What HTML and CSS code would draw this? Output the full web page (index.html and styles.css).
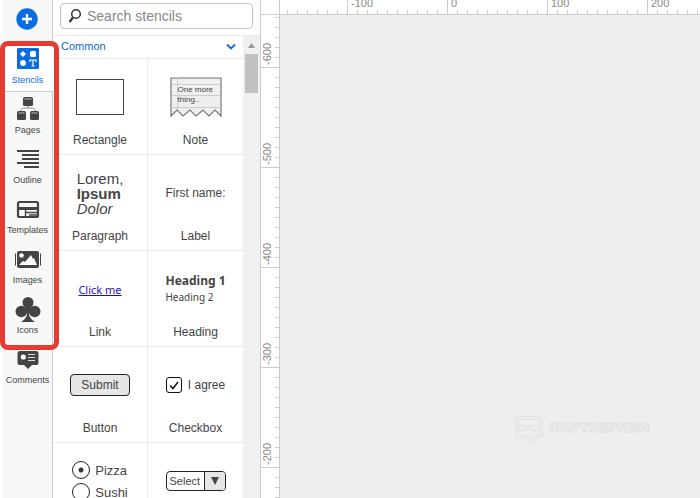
FILE: index.html
```html
<!DOCTYPE html>
<html lang="en">
<head>
    <meta charset="UTF-8">
    <meta name="viewport" content="width=device-width, initial-scale=1.0">
    <title>Stencils</title>
    <link rel="stylesheet" href="styles.css">
</head>
<body>

    <nav class="sidebar">
        <button class="add" aria-label="Add">
            <svg width="22" height="22" viewBox="0 0 22 22"><circle cx="11" cy="11" r="10.7" fill="#0a6ce0"/><path d="M11 6v10M6 11h10" stroke="#fff" stroke-width="2.4"/></svg>
        </button>
        <a href="#stencils" class="tab active">
            <svg width="28" height="28" viewBox="0 0 28 28"><rect x="3" y="3" width="22" height="21" rx="1" fill="#0a6ce0"/><path d="M9 6l3 3-3 3-3-3z" fill="#fff"/><rect x="16" y="6" width="6" height="6" rx="1.5" fill="#fff"/><circle cx="9" cy="18" r="2.9" fill="#fff"/><path d="M16 17v-2h6v2M19 15v6M17.5 21h3" fill="none" stroke="#fff" stroke-width="1.2"/></svg>
            <span>Stencils</span>
        </a>
        <a href="#pages" class="tab">
            <svg width="28" height="28" viewBox="0 0 28 28"><g fill="#444"><rect x="9" y="2" width="10" height="9" rx="1.5"/><rect x="3" y="16" width="9" height="9" rx="1.5"/><rect x="16" y="16" width="9" height="9" rx="1.5"/></g><path d="M10.500 4h7M4.500 18h6M17.500 18h6" stroke="#bbb" stroke-width="1"/><path d="M14 11v2M7 16c0-3 2-3 7-3s7 0 7 3" fill="none" stroke="#888"/></svg>
            <span>Pages</span>
        </a>
        <a href="#outline" class="tab">
            <svg width="28" height="28" viewBox="0 0 28 28"><path d="M3 6h22M8 10h17M8 14h17M3 18h22M10 22h15" stroke="#444" stroke-width="2"/></svg>
            <span>Outline</span>
        </a>
        <a href="#templates" class="tab">
            <svg width="28" height="28" viewBox="0 0 28 28"><rect x="4" y="7" width="20" height="15" rx="1.5" fill="none" stroke="#444" stroke-width="2.2"/><path d="M4 13.500h20" stroke="#444" stroke-width="3"/><path d="M11.500 14v8M12 17.500h12M15 20h9" stroke="#444" stroke-width="1.4"/></svg>
            <span>Templates</span>
        </a>
        <a href="#images" class="tab">
            <svg width="28" height="28" viewBox="0 0 28 28"><rect x="3" y="6" width="22" height="17" rx="2" fill="#444"/><path d="M1.500 8.500v12M26.500 8.500v12" stroke="#444"/><circle cx="7.500" cy="10.500" r="2.300" fill="#fff"/><path d="M5 20l4-4 2 1 6-7 2 4 1-1 3 7z" fill="#fff"/></svg>
            <span>Images</span>
        </a>
        <a href="#icons" class="tab">
            <svg width="28" height="28" viewBox="0 0 28 28"><g fill="#444"><circle cx="14" cy="7.500" r="5.500"/><circle cx="7.300" cy="16.500" r="5.800"/><circle cx="20.700" cy="16.500" r="5.800"/><path d="M11 10h6l-1 4h2v4h-3c0 4 2 6 6 9H7c4-3 6-5 6-9h-3v-4h2z"/></g></svg>
            <span>Icons</span>
        </a>
        <a href="#comments" class="tab">
            <svg width="28" height="28" viewBox="0 0 28 28"><path d="M6 6h16q2.500 0 2.500 2.500v9q0 2.500-2.500 2.500h-4l-4 4-4-4H6q-2.500 0-2.500-2.500v-9Q3.500 6 6 6z" fill="#444"/><circle cx="9.300" cy="12" r="2.600" fill="#fff"/><path d="M14 9.500h7M14 12.500h7M14 15.500h7" stroke="#ddd" stroke-width="1.200"/></svg>
            <span>Comments</span>
        </a>
    </nav>

    <section class="panel">
        <div class="search">
            <svg width="14" height="16" viewBox="0 0 14 16"><circle cx="8" cy="6" r="4.300" fill="none" stroke="#333" stroke-width="1.500"/><path d="M5 9.500L1.500 14" stroke="#333" stroke-width="2.200"/></svg>
            <input type="text" placeholder="Search stencils" aria-label="Search stencils">
        </div>
        <div class="panel-body">
            <div class="list">
                <button class="category">
                    Common
                    <svg width="10" height="7" viewBox="0 0 10 7"><path d="M1 1.500l4 4 4-4" fill="none" stroke="#0a6ce0" stroke-width="1.800"/></svg>
                </button>
                <div class="grid">
                    <div class="cell">
                        <div class="preview"><div class="rectangle"></div></div>
                        <div class="name">Rectangle</div>
                    </div>
                    <div class="cell">
                        <div class="preview">
                            <div class="note">
                                <svg width="52" height="41" viewBox="0 0 52 41"><path d="M1 1h50v38l-6-6-6 6-6-6-7 6-6-6-7 6-6-6-6 6z" fill="#efefef" stroke="#777" stroke-width="1.200"/><path d="M1 7.500h50M1 18.500h50M1 30.500h50M7.500 1v31" stroke="#ccc"/></svg>
                                <p>One more thing..</p>
                            </div>
                        </div>
                        <div class="name">Note</div>
                    </div>
                    <div class="cell">
                        <div class="preview"><div class="paragraph">Lorem,<br><b>Ipsum</b><br><i>Dolor</i></div></div>
                        <div class="name">Paragraph</div>
                    </div>
                    <div class="cell">
                        <div class="preview">First name:</div>
                        <div class="name">Label</div>
                    </div>
                    <div class="cell">
                        <div class="preview"><a href="#link" class="link">Click me</a></div>
                        <div class="name">Link</div>
                    </div>
                    <div class="cell">
                        <div class="preview">
                            <div class="heading">
                                <h1>Heading 1</h1>
                                <h2>Heading 2</h2>
                            </div>
                        </div>
                        <div class="name">Heading</div>
                    </div>
                    <div class="cell">
                        <div class="preview"><button class="submit">Submit</button></div>
                        <div class="name">Button</div>
                    </div>
                    <div class="cell">
                        <div class="preview">
                            <label class="check">
                                <input type="checkbox" checked>
                                <svg width="10" height="9" viewBox="0 0 10 9"><path d="M1 4.500l3 3L9 1" fill="none" stroke="#111" stroke-width="1.500"/></svg>
                                I agree
                            </label>
                        </div>
                        <div class="name">Checkbox</div>
                    </div>
                    <div class="cell">
                        <div class="preview">
                            <div class="radios">
                                <label><input type="radio" name="food" checked>Pizza</label>
                                <label><input type="radio" name="food">Sushi</label>
                            </div>
                        </div>
                    </div>
                    <div class="cell">
                        <div class="preview">
                            <div class="select">
                                <select aria-label="Select"><option>Select</option></select>
                                <span class="arrow"><svg width="10" height="8" viewBox="0 0 10 8"><path d="M1 0h8L5 8z" fill="#444"/></svg></span>
                            </div>
                        </div>
                    </div>
                </div>
            </div>
            <div class="scrollbar">
                <svg width="7" height="5" viewBox="0 0 7 5"><path d="M0 5h7L3.500 0z" fill="#999"/></svg>
                <div class="thumb"></div>
            </div>
        </div>
    </section>

    <main class="workspace">
        <div class="corner"></div>
        <div class="ruler-top">
            <span></span><span>-100</span><span>0</span><span>100</span><span>200</span>
        </div>
        <div class="ruler-left">
            <span>-600</span><span>-500</span><span>-400</span><span>-300</span><span>-200</span><span></span>
        </div>
        <div class="canvas">
            <div class="watermark">
                <svg width="28" height="30" viewBox="0 0 28 30"><g fill="none" stroke="#e0e0e0"><path d="M2.500.5h23q2 0 2 2v17.500q0 2-2 2H19v7.500h-1.500L10 22H2.500q-2 0-2-2V2.500q0-2 2-2z"/><path d="M3 3h22v16.500h-8.500v6L11 19.500H3z"/><path d="M4.500 9.500h19v3q-1 2.500-4 2.500t-4-4h-3q-1 4-4 4t-4-2.500z"/></g></svg>
                <span>ПАРТНЕРКИН</span>
            </div>
        </div>
    </main>

    <div class="highlight"></div>

</body>
</html>
```
FILE: styles.css
```css
* {
    box-sizing: border-box;
}
body {
    margin: 0;
    display: flex;
    height: 100vh;
    overflow: hidden;
    position: relative;
    background: #fff;
    font-family: "Liberation Sans", Arial, sans-serif;
    font-size: 12px;
    color: #444;
}
button, input, select {
    font-family: inherit;
    color: inherit;
    margin: 0;
}
svg {
    display: block;
    flex: none;
}

/* left navigation */
.sidebar {
    width: 50px;
    flex: none;
    margin-left: 3px;
    background: #f8f8f8;
    border-right: 1px solid #ccc;
}
.add {
    display: flex;
    width: 100%;
    height: 42px;
    padding: 8px 0 0 13px;
    border: none;
    background: none;
}
.tab {
    display: flex;
    flex-direction: column;
    align-items: center;
    height: 50px;
    padding-top: 3px;
    font-size: 9px;
    line-height: 14px;
    color: #444;
    text-decoration: none;
}
.active {
    margin-right: -1px;
    padding-right: 1px;
    background: #fff;
    border-bottom: 1px solid #ccc;
    color: #0a6ce0;
}

/* stencil panel */
.panel {
    display: flex;
    flex-direction: column;
    width: 207px;
    flex: none;
}
.search {
    display: flex;
    align-items: center;
    height: 26px;
    margin: 3px 7px 6px;
    padding-left: 7px;
    gap: 5px;
    border: 1px solid #c4c4c4;
    border-radius: 4px;
}
.search input {
    flex: 1;
    min-width: 0;
    padding: 0;
    border: none;
    outline: none;
    background: none;
    font-size: 14px;
}
.search input::placeholder {
    color: #888;
}
.panel-body {
    flex: 1;
    min-height: 0;
    display: flex;
    border-top: 1px solid #ebebeb;
}
.list {
    flex: 1;
    overflow: hidden;
}
.category {
    display: flex;
    align-items: center;
    justify-content: space-between;
    width: 100%;
    height: 23px;
    padding: 0 7px 2px 8px;
    border: none;
    border-bottom: 1px solid #ebebeb;
    background: none;
    font-size: 11px;
    color: #0a6ccc;
}
.grid {
    display: grid;
    grid-template-columns: 1fr 1fr;
}
.cell {
    height: 96px;
    border-bottom: 1px solid #ebebeb;
}
.cell:nth-child(odd) {
    border-right: 1px solid #ebebeb;
}
.preview {
    display: flex;
    align-items: center;
    justify-content: center;
    height: 76px;
}
.name {
    line-height: 10px;
    text-align: center;
}
.scrollbar {
    width: 17px;
    display: flex;
    flex-direction: column;
    align-items: center;
    gap: 6px;
    padding-top: 7px;
    background: #f0f0f0;
}
.thumb {
    width: 13px;
    height: 39px;
    background: #c1c1c1;
}

/* stencil previews */
.rectangle {
    width: 48px;
    height: 36px;
    border: 1px solid #444;
}
.note {
    position: relative;
}
.note p {
    position: absolute;
    top: 8px;
    left: 8px;
    width: 40px;
    margin: 0;
    font-size: 8px;
    line-height: 10px;
}
.paragraph {
    font-size: 15px;
    line-height: 15px;
}
.link {
    font-family: "Noto Sans", sans-serif;
    font-size: 11px;
    color: #1a0fc4;
}
.heading {
    font-family: "Noto Sans", sans-serif;
}
.heading h1, .heading h2 {
    margin: 0;
    font-size: 12px;
    line-height: 17px;
}
.heading h2 {
    font-size: 10px;
    font-weight: normal;
}
.submit {
    width: 60px;
    height: 22px;
    padding: 0;
    border: 1px solid #222;
    border-radius: 4px;
    background: #e6e6e6;
    font-size: 12px;
}
.check {
    position: relative;
    display: flex;
    align-items: center;
    gap: 6px;
}
.check input {
    appearance: none;
    width: 16px;
    height: 16px;
    border: 1px solid #111;
    border-radius: 3px;
}
.check svg {
    position: absolute;
    left: 3px;
}
.radios label {
    display: flex;
    align-items: center;
    gap: 5px;
    height: 22px;
    font-size: 13px;
}
.radios input {
    appearance: none;
    width: 18px;
    height: 18px;
    border: 1px solid #222;
    border-radius: 50%;
}
.radios input:checked {
    background: radial-gradient(circle, #333 2px, transparent 3px);
}
.select {
    position: relative;
}
.select select {
    display: block;
    appearance: none;
    width: 60px;
    height: 20px;
    padding: 0 0 0 3px;
    border: 1px solid #222;
    border-radius: 4px;
    background: #fff;
    font-size: 11px;
}
.arrow {
    position: absolute;
    top: 1px;
    right: 1px;
    bottom: 1px;
    width: 21px;
    display: flex;
    align-items: center;
    justify-content: center;
    border-left: 1px solid #222;
    border-radius: 0 3px 3px 0;
    background: #e6e6e6;
    pointer-events: none;
}

/* rulers and canvas */
.workspace {
    flex: 1;
    min-width: 0;
    display: grid;
    grid-template-columns: 19px 1fr;
    grid-template-rows: 15px 1fr;
    border-left: 1px solid #ccc;
    font-size: 11px;
    color: #888;
}
.corner {
    border-right: 1px solid #ccc;
    border-bottom: 1px solid #ccc;
}
.ruler-top {
    display: flex;
    overflow: hidden;
    border-bottom: 1px solid #ccc;
    background: linear-gradient(90deg, #ccc 1px, transparent 1px) 7px 10px / 10px 4px repeat-x;
}
.ruler-top span {
    flex: none;
    width: 100px;
    height: 14px;
    padding-left: 3px;
    border-left: 1px solid #ccc;
    line-height: 6px;
}
.ruler-top span:first-child {
    width: 67px;
    border: none;
}
.ruler-left {
    display: flex;
    flex-direction: column;
    overflow: hidden;
    border-right: 1px solid #ccc;
    background: linear-gradient(#ccc 1px, transparent 1px) right 2px / 4px 10px repeat-y;
}
.ruler-left span {
    flex: none;
    height: 100px;
    padding: 2px 0 0 5px;
    border-top: 1px solid #ccc;
    line-height: 13px;
    writing-mode: vertical-rl;
    transform: rotate(180deg);
}
.ruler-left span:first-child {
    height: 53px;
}
.canvas {
    display: flex;
    align-items: flex-end;
    justify-content: flex-end;
    overflow: hidden;
    background: #eee;
}
.watermark {
    display: flex;
    gap: 6px;
    margin: 0 50px 52px 0;
}
.watermark span {
    font-family: "DejaVu Sans", sans-serif;
    font-size: 13px;
    font-weight: bold;
    line-height: 23px;
    color: #eee;
    -webkit-text-stroke: 1px #e0e0e0;
}

/* frame drawn over the navigation tabs */
.highlight {
    position: absolute;
    top: 41px;
    left: 0;
    width: 59px;
    height: 309px;
    border: 5px solid #e53b32;
    border-radius: 8px;
    pointer-events: none;
}
```
